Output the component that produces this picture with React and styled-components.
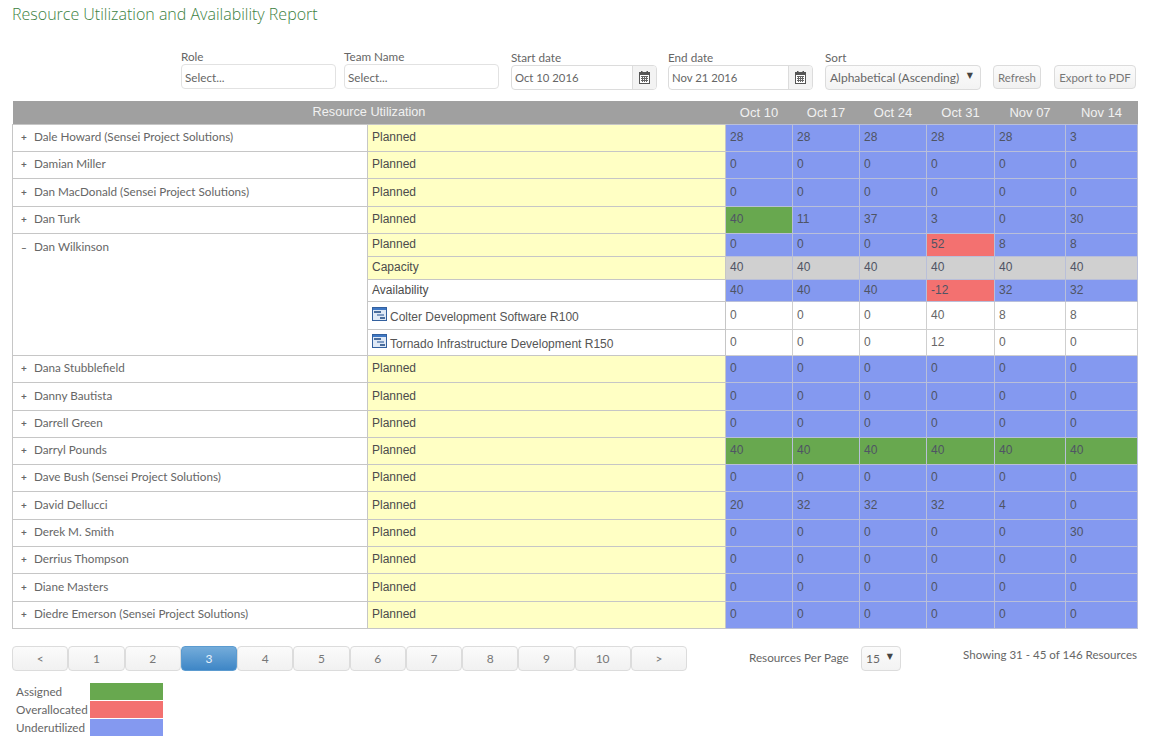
import React from "react";
import styled, { createGlobalStyle } from "styled-components";

const Global = createGlobalStyle`
  html, body { margin: 0; padding: 0; background: #fff; }
  body { font-family: Lato, "Open Sans", sans-serif; color: #666; }
`;

const Page = styled.div`
  width: 1151px;
  height: 742px;
  overflow: hidden;
  padding: 0 14px 0 12px;
  box-sizing: border-box;
`;
const Title = styled.h1`
  margin: 0;
  padding-top: 3px;
  height: 47px;
  box-sizing: border-box;
  font-family: "Open Sans", sans-serif;
  font-size: 16px;
  line-height: 22px;
  font-weight: 300;
  color: #3c7f42;
`;
const Toolbar = styled.div`
  display: flex;
  align-items: flex-start;
  padding-left: 169px;
  height: 54px;
`;
const Field = styled.div`
  width: ${(p) => p.$w}px;
  margin-right: ${(p) => p.$mr || 0}px;
  padding-top: ${(p) => p.$pt || 0}px;
  flex: none;
`;
const Label = styled.div`
  font-size: 11.7px;
  line-height: 12px;
  margin-bottom: 2px;
  color: #666;
`;
const TextInput = styled.input`
  display: block;
  width: 100%;
  box-sizing: border-box;
  height: 25px;
  margin: 0;
  padding: 0 3px;
  border: 1px solid #e2e2e2;
  border-radius: 4px;
  font: 400 11.7px Lato, sans-serif;
  color: #666;
  background: #fff;
  outline: none;
  &::placeholder { color: #666; opacity: 1; }
`;
const DateBox = styled.div`
  display: flex;
  height: 25px;
  box-sizing: border-box;
  border: 1px solid #dcdcdc;
  border-radius: 4px;
  overflow: hidden;
  font-size: 11.3px;
  color: #666;
`;
const DateText = styled.div`
  flex: 1;
  padding-left: 3px;
  line-height: 23px;
`;
const DateButton = styled.div`
  width: 23px;
  display: flex;
  align-items: center;
  justify-content: center;
  border-left: 1px solid #dcdcdc;
  background: #f3f3f3;
`;
const SelectBox = styled.div`
  display: flex;
  align-items: center;
  justify-content: space-between;
  box-sizing: border-box;
  height: 25px;
  padding: 0 7px 0 4px;
  border: 1px solid #dcdcdc;
  border-radius: 4px;
  background: linear-gradient(#fbfbfb, #f3f3f3);
  font-size: 12px;
  color: #666;
`;
const Caret = styled.span`
  font-size: 8px;
  color: #444;
  position: relative;
  top: -2px;
  font-family: "DejaVu Sans", sans-serif;
`;
const ToolButton = styled.button`
  display: block;
  width: 100%;
  height: 24px;
  padding: 0;
  border: 1px solid #dcdcdc;
  border-radius: 4px;
  background: linear-gradient(#fbfbfb, #f1f1f1);
  font: 400 11.4px Lato, sans-serif;
  color: #777;
`;

const Table = styled.table`
  width: 1125px;
  table-layout: fixed;
  border-collapse: collapse;
  font-family: "Liberation Sans", Arial, sans-serif;
  font-size: 12px;
  color: #4c4c4c;
  td, th { box-sizing: border-box; }
`;
const HeadCell = styled.th`
  height: 23px;
  padding: 0;
  background: #a0a0a0;
  color: #f1f1f1;
  font-size: ${(p) => p.$fs || 13}px;
  font-weight: 400;
  text-align: center;
`;
const NameCell = styled.td`
  padding: ${(p) => (p.$open ? "5px 0 0 8px" : "0 0 1px 8px")};
  vertical-align: ${(p) => (p.$open ? "top" : "middle")};
  border: 1px solid #c6c6c6;
  font-family: Lato, sans-serif;
  font-size: 11.7px;
  line-height: 15px;
  color: #666;
`;
const Toggle = styled.span`
  display: inline-block;
  width: 13px;
  font-size: 10px;
  font-weight: 700;
  color: #666;
`;
const RowLabel = styled.td`
  height: ${(p) => p.$h}px;
  padding: 0 0 ${(p) => (p.$flush ? 0 : 1)}px 4px;
  background: ${(p) => (p.$white ? "#fff" : "#ffffc4")};
  border: 1px solid #c6c6c6;
`;
const ProjectName = styled.span`
  display: inline-flex;
  align-items: flex-start;
  gap: 3px;
  color: #555;
`;
const ProjectText = styled.span`
  padding-top: 3px;
  line-height: 14px;
`;
const colors = {
  u: "#8499f0",
  a: "#68a84f",
  o: "#f37170",
  c: "#d0d0d0",
  w: "#ffffff",
};
const ValueCell = styled.td`
  padding: 0 0 ${(p) => (p.$k === "w" ? 0 : 1)}px 4px;
  background: ${(p) => colors[p.$k]};
  border: 1px solid ${(p) => (p.$k === "w" ? "#cfcfcf" : "#b9bfd9")};
  color: ${(p) => (p.$k === "w" ? "#666" : "#4f5464")};
`;

const Footer = styled.div`
  display: flex;
  align-items: flex-start;
  margin-top: 17px;
  height: 37px;
`;
const Pager = styled.div`
  display: flex;
  width: 675px;
  flex: none;
`;
const PageButton = styled.div`
  flex: 1;
  height: 25px;
  box-sizing: border-box;
  display: flex;
  align-items: center;
  justify-content: center;
  border: 1px solid ${(p) => (p.$active ? "#5b9bd0" : "#dcdcdc")};
  border-radius: 4px;
  background: ${(p) =>
    p.$active ? "linear-gradient(#74acda, #3e86c6)" : "linear-gradient(#fbfbfb, #f1f1f1)"};
  color: ${(p) => (p.$active ? "#e8f2fa" : "#777")};
  font-size: 12px;
`;
const PerPageLabel = styled.div`
  margin-left: 62px;
  width: 112px;
  flex: none;
  font-size: 11.7px;
  line-height: 23px;
  color: #666;
`;
const PerPage = styled.div`
  width: 40px;
  flex: none;
`;
const Showing = styled.div`
  flex: 1;
  text-align: right;
  font-size: 11.55px;
  line-height: 18px;
  color: #666;
`;
const Legend = styled.div`
  display: grid;
  grid-template-columns: 74px 73px;
  grid-auto-rows: 17px;
  row-gap: 1px;
  padding-left: 4px;
`;
const LegendLabel = styled.div`
  font-size: 11.7px;
  line-height: 17px;
  color: #666;
`;
const Swatch = styled.div`
  background: ${(p) => colors[p.$k]};
`;

const CalendarIcon = () => (
  <svg width="11" height="13" viewBox="0 0 11 13" aria-hidden="true">
    <rect x="0.5" y="1.5" width="10" height="11" fill="#fff" stroke="#555" />
    <rect x="0" y="1" width="11" height="3" fill="#555" />
    <rect x="2" y="0" width="1.5" height="2" fill="#555" />
    <rect x="7.5" y="0" width="1.5" height="2" fill="#555" />
    <path d="M2 5.5h7M2 7.5h7M2 9.5h7M3.5 5v6M5.5 5v6M7.5 5v6" stroke="#666" strokeWidth="1" />
  </svg>
);
const ProjectIcon = () => (
  <svg width="15" height="14" viewBox="0 0 15 14" aria-hidden="true">
    <rect x="0.5" y="0.5" width="14" height="13" fill="#dfe9f6" stroke="#33609e" />
    <rect x="1" y="1" width="13" height="2" fill="#3f78c4" />
    <rect x="2" y="4" width="7" height="2" fill="#4a6d9c" />
    <rect x="5" y="7" width="7" height="2" fill="#7f9cc4" />
    <rect x="8" y="10" width="5" height="2" fill="#4a6d9c" />
  </svg>
);

const weeks = ["Oct 10", "Oct 17", "Oct 24", "Oct 31", "Nov 07", "Nov 14"];
const widths = [355, 358, 67, 67, 67, 68, 71, 72];
const Z = [0, 0, 0, 0, 0, 0];
const rowsTop = [
  ["Dale Howard (Sensei Project Solutions)", [28, 28, 28, 28, 28, 3], "uuuuuu", 27],
  ["Damian Miller", Z, "uuuuuu", 27],
  ["Dan MacDonald (Sensei Project Solutions)", Z, "uuuuuu", 28],
  ["Dan Turk", [40, 11, 37, 3, 0, 30], "auuuuu", 27],
];
const rowsBottom = [
  ["Dana Stubblefield", Z, "uuuuuu", 27],
  ["Danny Bautista", Z, "uuuuuu", 28],
  ["Darrell Green", Z, "uuuuuu", 27],
  ["Darryl Pounds", [40, 40, 40, 40, 40, 40], "aaaaaa", 27],
  ["Dave Bush (Sensei Project Solutions)", Z, "uuuuuu", 27],
  ["David Dellucci", [20, 32, 32, 32, 4, 0], "uuuuuu", 28],
  ["Derek M. Smith", [0, 0, 0, 0, 0, 30], "uuuuuu", 27],
  ["Derrius Thompson", Z, "uuuuuu", 27],
  ["Diane Masters", Z, "uuuuuu", 28],
  ["Diedre Emerson (Sensei Project Solutions)", Z, "uuuuuu", 27],
];
const pages = ["<", "1", "2", "3", "4", "5", "6", "7", "8", "9", "10", ">"];

const Values = ({ vals, kinds }) =>
  vals.map((v, i) => (
    <ValueCell key={i} $k={kinds[i]}>
      {v}
    </ValueCell>
  ));

const Collapsed = ({ rows }) =>
  rows.map(([name, vals, kinds, h]) => (
    <tr key={name}>
      <NameCell>
        <Toggle>+</Toggle>
        {name}
      </NameCell>
      <RowLabel $h={h}>Planned</RowLabel>
      <Values vals={vals} kinds={kinds} />
    </tr>
  ));

export default function App() {
  return (
    <Page>
      <Global />
      <Title>Resource Utilization and Availability Report</Title>
      <Toolbar>
        <Field $w={155} $mr={8} $pt={3}>
          <Label>Role</Label>
          <TextInput placeholder="Select..." />
        </Field>
        <Field $w={155} $mr={12} $pt={3}>
          <Label>Team Name</Label>
          <TextInput placeholder="Select..." />
        </Field>
        <Field $w={146} $mr={11} $pt={4}>
          <Label>Start date</Label>
          <DateBox>
            <DateText>Oct 10 2016</DateText>
            <DateButton><CalendarIcon /></DateButton>
          </DateBox>
        </Field>
        <Field $w={145} $mr={12} $pt={4}>
          <Label>End date</Label>
          <DateBox>
            <DateText>Nov 21 2016</DateText>
            <DateButton><CalendarIcon /></DateButton>
          </DateBox>
        </Field>
        <Field $w={156} $mr={12} $pt={4}>
          <Label>Sort</Label>
          <SelectBox>
            Alphabetical (Ascending) <Caret>▼</Caret>
          </SelectBox>
        </Field>
        <Field $w={48} $mr={13} $pt={18}>
          <ToolButton>Refresh</ToolButton>
        </Field>
        <Field $w={82} $pt={18}>
          <ToolButton>Export to PDF</ToolButton>
        </Field>
      </Toolbar>
      <Table>
        <colgroup>
          {widths.map((w, i) => (
            <col key={i} width={w} />
          ))}
        </colgroup>
        <thead>
          <tr>
            <HeadCell colSpan={2} $fs={12.7}>Resource Utilization</HeadCell>
            {weeks.map((w) => (
              <HeadCell key={w}>{w}</HeadCell>
            ))}
          </tr>
        </thead>
        <tbody>
          <Collapsed rows={rowsTop} />
          <tr>
            <NameCell $open rowSpan={5}>
              <Toggle>–</Toggle>
              Dan Wilkinson
            </NameCell>
            <RowLabel $h={23}>Planned</RowLabel>
            <Values vals={[0, 0, 0, 52, 8, 8]} kinds="uuuouu" />
          </tr>
          <tr>
            <RowLabel $h={23}>Capacity</RowLabel>
            <Values vals={[40, 40, 40, 40, 40, 40]} kinds="cccccc" />
          </tr>
          <tr>
            <RowLabel $h={22} $white>Availability</RowLabel>
            <Values vals={[40, 40, 40, -12, 32, 32]} kinds="uuuouu" />
          </tr>
          <tr>
            <RowLabel $h={28} $white $flush>
              <ProjectName>
                <ProjectIcon />
                <ProjectText>Colter Development Software R100</ProjectText>
              </ProjectName>
            </RowLabel>
            <Values vals={[0, 0, 0, 40, 8, 8]} kinds="wwwwww" />
          </tr>
          <tr>
            <RowLabel $h={26} $white $flush>
              <ProjectName>
                <ProjectIcon />
                <ProjectText>Tornado Infrastructure Development R150</ProjectText>
              </ProjectName>
            </RowLabel>
            <Values vals={[0, 0, 0, 12, 0, 0]} kinds="wwwwww" />
          </tr>
          <Collapsed rows={rowsBottom} />
        </tbody>
      </Table>
      <Footer>
        <Pager>
          {pages.map((p, i) => (
            <PageButton key={i} $active={p === "3"}>{p}</PageButton>
          ))}
        </Pager>
        <PerPageLabel>Resources Per Page</PerPageLabel>
        <PerPage>
          <SelectBox>15 <Caret>▼</Caret></SelectBox>
        </PerPage>
        <Showing>Showing 31 - 45 of 146 Resources</Showing>
      </Footer>
      <Legend>
        <LegendLabel>Assigned</LegendLabel>
        <Swatch $k="a" />
        <LegendLabel>Overallocated</LegendLabel>
        <Swatch $k="o" />
        <LegendLabel>Underutilized</LegendLabel>
        <Swatch $k="u" />
      </Legend>
    </Page>
  );
}
